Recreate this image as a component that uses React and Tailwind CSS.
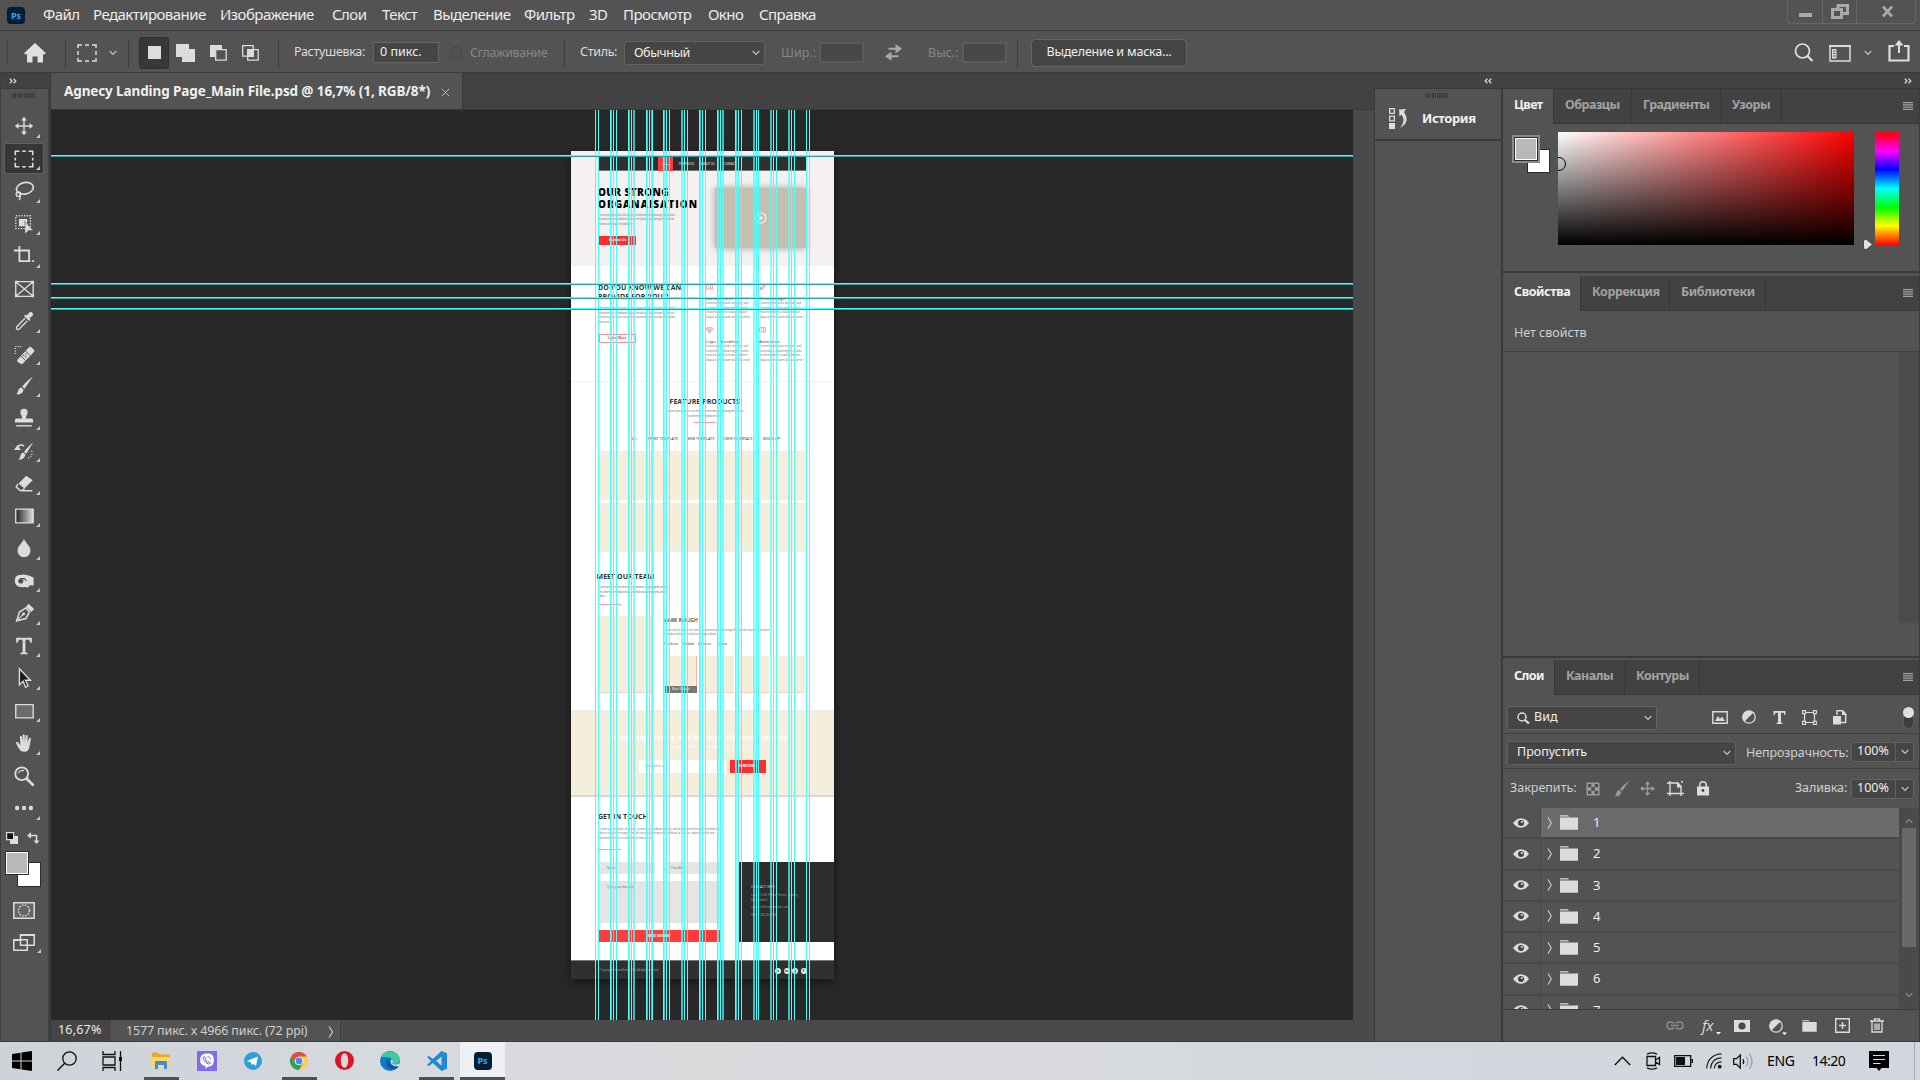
import React from "react";

const UI = "font-['Noto_Sans','Open_Sans',sans-serif]";

/* ---------- small shared pieces ---------- */

const Svg = ({ w = 24, h = 24, vb = "0 0 24 24", className = "", children }) => (
  <svg width={w} height={h} viewBox={vb} fill="none" className={`shrink-0 ${className}`}>
    {children}
  </svg>
);

const Chevron = ({ className = "text-[#c4c4c4]" }) => (
  <Svg w={8} h={6} vb="0 0 8 6" className={className}>
    <path d="M.7 1 4 4.5 7.3 1" stroke="currentColor" strokeWidth="1.1" />
  </Svg>
);

const DoubleArrow = ({ left }) => (
  <Svg w={8} h={6} vb="0 0 8 6" className={left ? "rotate-180" : ""}>
    <path d="M.8.6 3 3 .8 5.4M4.6.6 6.8 3 4.6 5.4" stroke="#dcdcdc" strokeWidth="1.3" />
  </Svg>
);

const Grip = ({ className = "" }) => (
  <div className={`flex gap-px ${className}`}>
    {Array.from({ length: 10 }, (_, i) => (
      <span key={i} className="h-[5px] w-[1.4px] bg-[#3a3a3a]" />
    ))}
  </div>
);

const Burger = () => (
  <Svg w={10} h={8} vb="0 0 10 8">
    <path d="M0 .7h10M0 2.9h10M0 5.1h10M0 7.3h10" stroke="#b8b8b8" strokeWidth="1" />
  </Svg>
);

const Sep = ({ className = "" }) => <div className={`h-[28px] w-px shrink-0 bg-[#3c3c3c] ${className}`} />;

/* ---------- menu bar ---------- */

const menus = [
  ["Файл", "w-[50px]"],
  ["Редактирование", "w-[127px]"],
  ["Изображение", "w-[112px]"],
  ["Слои", "w-[50px]"],
  ["Текст", "w-[51px]"],
  ["Выделение", "w-[91px]"],
  ["Фильтр", "w-[65px]"],
  ["3D", "w-[34px]"],
  ["Просмотр", "w-[85px]"],
  ["Окно", "w-[51px]"],
  ["Справка", "w-[70px]"],
];

const PsLogo = ({ className }) => (
  <div className={`flex items-center justify-center bg-[#001e36] font-bold leading-none text-[#31a8ff] ${className}`}>
    Ps
  </div>
);

const MenuBar = () => (
  <div className="flex h-[31px] items-center border-b border-[#393939] bg-[#535353] pl-[7px]">
    <PsLogo className="mr-[18px] h-[17px] w-[18px] rounded-[4px] text-[9px]" />
    {menus.map(([t, c]) => (
      <span key={t} className={`shrink-0 whitespace-nowrap pb-[2px] text-[15px] leading-none tracking-[-0.550px] text-[#ececec] ${c}`}>{t}</span>
    ))}
    <div className="ml-auto mr-[4px] flex h-[24px] w-[129px] self-start rounded-b-[4px] border border-t-0 border-[#666]">
      <div className="flex w-[35px] items-center justify-center border-r border-[#666]">
        <span className="mt-[7px] h-[4px] w-[13px] bg-[#a9a9a9]" />
      </div>
      <div className="flex w-[34px] items-center justify-center border-r border-[#666]">
        <Svg w={18} h={15} vb="0 0 18 15">
          <path d="M1.500 5.500h9v8h-9zM7 5V1.500h9.500v8H11.500" stroke="#a9a9a9" strokeWidth="3" />
        </Svg>
      </div>
      <div className="flex flex-1 items-center justify-center pl-[2px]">
        <Svg w={13} h={11} vb="0 0 13 11">
          <path d="M2 .5 11 10.500M11 .5 2 10.500" stroke="#a9a9a9" strokeWidth="2.800" />
        </Svg>
      </div>
    </div>
  </div>
);

/* ---------- options bar ---------- */

const OptionsBar = () => (
  <div className="flex h-[42px] items-center border-b border-[#3a3a3a] bg-[#535353] pt-[2px] text-[12.500px] leading-none text-[#dcdcdc]">
    <div className="ml-[6px] flex w-[18px] flex-col gap-px">
      {Array.from({ length: 12 }, (_, i) => <span key={i} className="h-px w-[2px] bg-[#3d3d3d]" />)}
    </div>
    <Svg w={22} h={20} vb="0 0 22 20" className="mr-[19px]">
      <path d="M11 0 0 10.200 1.500 11.500 3 11v8.500h5.500v-6h5v6H19V11l1.500.5L22 10.200Z" fill="#e0e0e0" />
    </Svg>
    <Sep className="mr-[11px]" />
    <Svg w={20} h={18} vb="0 0 20 18" className="mr-[12px]">
      <path d="M1 4V1h4M8 1h4M15 1h4v3M19 7v4M19 14v3h-4M12 17H8M5 17H1v-3M1 11V7" stroke="#dcdcdc" strokeWidth="1.500" />
    </Svg>
    <Chevron />
    <Sep className="ml-[11px] mr-[10px]" />
    <div className="flex h-[32px] w-[30px] items-center justify-center rounded-[3px] border border-[#303030] bg-[#383838]">
      <span className="h-[13px] w-[13px] bg-[#dcdcdc]" />
    </div>
    <Svg w={19} h={18} vb="0 0 19 18" className="ml-[7px]">
      <path d="M0 0h13v5h6v13H6v-5H0z" fill="#dcdcdc" />
    </Svg>
    <Svg w={17} h={16} vb="0 0 17 16" className="ml-[15px]">
      <path d="M0 0h12v4H5v8H0z" fill="#dcdcdc" />
      <path d="M5.700 4.700h10.500v10.500H5.700z" stroke="#dcdcdc" strokeWidth="1.300" />
    </Svg>
    <Svg w={17} h={16} vb="0 0 17 16" className="ml-[15px]">
      <path d="M.7.7h10.500v10.500H.7zM5.700 4.700h10.500v10.500H5.700z" stroke="#dcdcdc" strokeWidth="1.300" />
      <path d="M5 4h7v8H5z" fill="#dcdcdc" />
    </Svg>
    <Sep className="ml-[19px] mr-[15px]" />
    <span className="-mt-px w-[79px] shrink-0 whitespace-nowrap tracking-[-0.300px]">Растушевка:</span>
    <div className="-mt-px flex h-[21px] w-[66px] items-center border border-[#666] bg-[#454545] pl-[6px] text-[#efefef]">0 пикс.</div>
    <span className="ml-[12px] h-[12px] w-[11px] rounded-[3px] border border-[#484848] bg-[#515151]" />
    <span className="ml-[8px] mt-[2px] w-[94px] shrink-0 whitespace-nowrap tracking-[-0.300px] text-[#868686]">Сглаживание</span>
    <Sep className="mr-[15px]" />
    <span className="-mt-px w-[44px] shrink-0 whitespace-nowrap tracking-[-0.300px]">Стиль:</span>
    <div className="mt-[1px] flex h-[24px] w-[141px] items-center justify-between rounded-[3px] border border-[#626262] bg-[#454545] pl-[9px] pr-[4px] text-[#efefef]">
      <span className="tracking-[-0.400px]">Обычный</span><Chevron />
    </div>
    <span className="ml-[16px] mt-[2px] w-[38px] shrink-0 whitespace-nowrap text-[#868686]">Шир.:</span>
    <div className="-mt-px h-[21px] w-[45px] border-2 border-[#5b5b5b] bg-[#484848]" />
    <Svg w={17} h={17} vb="0 0 17 17" className="ml-[21px]">
      <path d="M3.500 4.700H11M13.500 12.300H6" stroke="#a8a8a8" strokeWidth="2" />
      <path d="M10.500 0 17 4.700 10.500 9.400zM6.500 7.600 0 12.300 6.500 17z" fill="#a8a8a8" />
    </Svg>
    <span className="ml-[26px] mt-[2px] w-[34px] shrink-0 whitespace-nowrap text-[#868686]">Выс.:</span>
    <div className="-mt-px h-[21px] w-[45px] border-2 border-[#5b5b5b] bg-[#484848]" />
    <Sep className="ml-[10px] mr-[13px]" />
    <div className="flex h-[28px] w-[156px] items-center justify-center rounded-[4px] border border-[#666] bg-[#454545] tracking-[-0.200px] text-[#efefef]">
      Выделение и маска...
    </div>
    <div className="ml-auto flex items-center pr-[10px]">
      <Svg w={20} h={19} vb="0 0 20 19" className="mr-[15px]">
        <circle cx="8.500" cy="8" r="7" stroke="#e0e0e0" strokeWidth="1.700" />
        <path d="m13.500 13 5 5" stroke="#e0e0e0" strokeWidth="2.200" />
      </Svg>
      <Svg w={22} h={17} vb="0 0 22 17" className="mr-[13px] mt-[1px]">
        <path d="M1 1.200h20v14.800H1z" stroke="#dcdcdc" strokeWidth="1.500" />
        <path d="M3 4h4.500v9.500H3z" fill="#dcdcdc" />
        <path d="M4 6h2.500M4 8.500h2.500M4 11h2.500" stroke="#535353" />
        <path d="M0 1h22" stroke="#dcdcdc" strokeWidth="2" />
      </Svg>
      <Chevron />
      <Svg w={22} h={22} vb="0 0 22 22" className="-mt-[3px] ml-[16px]">
        <path d="M6 6H1.500v14.500h19V6H16" stroke="#e0e0e0" strokeWidth="2.200" />
        <path d="M11 13V4" stroke="#e0e0e0" strokeWidth="2" />
        <path d="M11 0 6.500 5.500h9z" fill="#e0e0e0" />
      </Svg>
    </div>
  </div>
);

/* ---------- tools ---------- */

const S = { stroke: "#dcdcdc", strokeWidth: 1.5 };
const F = { fill: "#dcdcdc" };

const tools = [
  <><path d="M12 4v16M4 12h16" {...S} /><path d="M12 2 8.800 6h6.400zM12 22l-3.200-4h6.400zM2 12l4-3.200v6.400zM22 12l-4-3.200v6.400z" {...F} /></>,
  <path d="M2.500 8V3.500H7M10 3.500h4M17 3.500h4.500V8M21.500 10.500v3M21.500 16v4.500H17M14 20.500h-4M7 20.500H2.500V16M2.500 13.500v-3" {...S} strokeWidth="1.700" />,
  <><ellipse cx="13" cy="9" rx="9.300" ry="6.300" transform="rotate(-12 13 9)" {...S} strokeWidth="1.800" /><circle cx="6" cy="15.500" r="2.500" {...S} /><path d="M7 16c1.500 2 1 4-.5 6" {...S} /></>,
  <><path d="M3 3h16v14H3z" {...S} strokeDasharray="1.500 1.500" /><path d="M6.500 6.500h9v8h-9z" {...F} /><path d="m13 9 9 10h-5l-4 4z" {...F} stroke="#535353" strokeWidth=".6" /></>,
  <path d="M1 6h16.500v12M7 1v16.500h12M21 17.500h2" {...S} strokeWidth="2" />,
  <><path d="M3 4h19v16H3zM3 4l19 16M22 4 3 20" {...S} /><path d="M2 3h3v3H2zM20 3h3v3h-3zM2 18h3v3H2zM20 18h3v3h-3z" {...F} /></>,
  <><path d="m13 9-9 9.500c-1 2 .5 3.500 2.500 2.500l9-9" {...S} /><path d="M12 6.500 13.500 5l1.500 1 2.500-3c2-2.500 6 1 3.800 3.300L18 9l1 1.500L17.500 12z" {...F} /></>,
  <><path d="m4.500 18.500 13-14c1.500-1.500 5.500 3 6 4.500L10.500 22.500c-1.500 1.500-7-2.500-6-4z" {...F} /><path d="m8.500 14 5 5M13.500 8.500l5 5" stroke="#535353" /><path d="M11.700 13.500h.1M14.200 12h.1M14 15h.1" stroke="#535353" strokeWidth="1.500" strokeLinecap="round" /><path d="M2.500 12V4h7.500" {...S} strokeDasharray="1.200 1.500" /></>,
  <><path d="M21.500 2 12.500 15l-2.500-2.500C13 9 17 5 21.500 2z" {...F} /><path d="M9 13.500l2.500 2.500c-.5 4-4.500 5.500-8 5 2.500-2 1.500-6.500 5.500-7.500z" {...F} /></>,
  <><path d="M12 2a4 4 0 0 1 4 4c0 2.500-2 3.500-2 6.500h6.500c1 0 1.500 1 1.500 4.500H2c0-3.500.5-4.500 1.500-4.500H10c0-3-2-4-2-6.500a4 4 0 0 1 4-4z" {...F} /><path d="M3.500 20.500h17" {...S} /></>,
  <><path d="M22 2.500 14.500 15l-2.500-2C15 9 18 6 22 2.500zM11 13.500l2.500 2c-.5 4.500-4 6-7.500 6 2.500-2.500 1.500-7 5-8z" {...F} /><path d="M4 8.500C7 4.500 11 5 12 7" {...S} /><path d="M1 11h7.500L5 5.500z" {...F} /><path d="M20.500 12v5l-4 3" {...S} strokeDasharray="1.200 1.800" /></>,
  <><path d="m14.500 4 7 5L12.500 18 6 12.500z" {...F} /><path d="M5.500 13 3.500 16.500 7.500 20h3l2-2M8 20.500h13" {...S} /></>,
  <><defs><linearGradient id="toolGrad"><stop stopColor="#222" /><stop offset="1" stopColor="#ddd" /></linearGradient></defs><path d="M3 4.500h19v15H3z" fill="url(#toolGrad)" {...S} /></>,
  <path d="M12 2c2 5 7 8 7 12.500A7 7 0 0 1 12 22a7 7 0 0 1-7-7.500C5 10 10 7 12 2z" {...F} />,
  <><path d="M7 5.500c5-1.500 11 0 15.500 3V17l-4-.5-2 2.500-4-.5C6 19.500 2 16.500 2 12S4 6 7 5.500z" {...F} /><circle cx="8.500" cy="12" r="2.800" fill="#535353" /><path d="M8 9.500h4.500l2 2.500" stroke="#535353" strokeWidth="1.300" /></>,
  <><path d="M4 20.500 7 11l7-4.500L18 11l-4 7z" {...S} strokeWidth="1.700" /><path d="M4 20.500 11 13.500" {...S} strokeWidth="1.200" /><circle cx="11.500" cy="13" r="1.600" {...F} /><path d="m14 5.500 3-3.500 6 5.500-3 3.300z" {...F} /></>,
  <path d="M3.500 3h17v5.500h-1.500L17.500 5.200H13.500v13.500L16 19.500V21H8v-1.500l2.500-.8V5.200H6.500L5 8.500H3.500z" {...F} />,
  <path d="M7 2 19 14.500h-5.500l3 6-2.700 1.500-2.800-6.500-4 4z" fill="#1c1c1c" {...S} />,
  <path d="M3 5h19v14.500H3z" fill="#6b6b6b" {...S} />,
  <path d="M3 11.500c1-1 2.500-.5 3.500 1L8 14.500 7.500 5c.2-1.300 2-1.300 2.200 0l.8 6V3.500c.2-1.400 2.200-1.400 2.400 0v7.500l1-7c.3-1.300 2.200-1 2.200.3l-.3 7.200 1.700-4.500c.6-1.200 2.300-.6 2 .8L18 16c-.8 4-2.500 5.500-6 5.500-4 0-5-2-9-10z" {...F} />,
  <><circle cx="9.500" cy="9.500" r="7" {...S} strokeWidth="2" /><path d="M6 9a4 4 0 0 1 6-2.500" {...S} strokeWidth="1.200" /><path d="m14.500 14.500 8 8" {...S} strokeWidth="3" /></>,
  <><circle cx="4.500" cy="12" r="2.400" {...F} /><circle cx="12" cy="12" r="2.400" {...F} /><circle cx="19.500" cy="12" r="2.400" {...F} /></>,
];

const ToolBar = () => (
  <div className="flex w-[50px] shrink-0 flex-col border-l border-[#3d3d3d] bg-[#535353]">
    <div className="flex h-[16px] items-center border-b border-[#3a3a3a] bg-[#424242] pl-[8px]"><DoubleArrow /></div>
    <div className="flex flex-1 flex-col border-r-2 border-[#404040]">
      <div className="h-[21px] pl-[11px] pt-[4px]"><Grip /></div>
      {tools.map((t, i) => (
        <div key={i} className="flex h-[32.480px] shrink-0 items-center pl-[3px]">
          <div className={`relative flex h-[31px] w-[40px] items-center justify-center rounded-[2px] border ${i === 1 ? "border-[#616161] bg-[#373737]" : "border-transparent"}`}>
            <Svg w={22} h={22}>{t}</Svg>
            {i !== 5 && i !== 20 && (
              <Svg w={4} h={4} vb="0 0 4 4" className="absolute bottom-[3px] right-[3px]"><path d="M4 0v4H0z" fill="#c8c8c8" /></Svg>
            )}
          </div>
        </div>
      ))}
      <div className="mt-[3px] flex h-[22px] items-center pl-[5px]">
        <Svg w={12} h={12} vb="0 0 12 12"><path d="M4 4h8v8H4z" fill="#dcdcdc" /><path d="M.6.6h7v7h-7z" fill="#111" stroke="#dcdcdc" strokeWidth="1.200" /></Svg>
        <Svg w={13} h={12} vb="0 0 13 12" className="ml-[9px]"><path d="M2 3.500h7.500V10" stroke="#dcdcdc" strokeWidth="1.500" /><path d="M0 3.500 4 .3v6.400zM9.500 12 6.500 8.500h6z" fill="#dcdcdc" /></Svg>
      </div>
      <div className="relative mt-[2px] h-[36px]">
        <div className="absolute left-[16px] top-[11px] h-[25px] w-[24px] border border-[#2b2b2b] bg-white" />
        <div className="absolute left-[4px] top-0 h-[24px] w-[24px] border border-[#2b2b2b] bg-white p-px"><div className="h-full w-full bg-[#b8b8b8]" /></div>
      </div>
      <Svg w={22} h={17} vb="0 0 22 17" className="ml-[12px] mt-[15px]">
        <path d="M.8.8h20.400v15.400H.8z" fill="#666" stroke="#dcdcdc" strokeWidth="1.500" /><circle cx="11" cy="8.500" r="5.500" stroke="#dcdcdc" strokeWidth="1.500" strokeDasharray="1.500 1.400" />
      </Svg>
      <div className="flex items-end">
        <Svg w={22} h={17} vb="0 0 22 17" className="ml-[12px] mt-[15px]">
          <path d="M.8 5.800h13.400v10.400H.8zM7.500.8h13.700v10.400H7.500z" fill="#535353" stroke="#dcdcdc" strokeWidth="1.500" /><path d="M0 6h7M7 1h15" stroke="#dcdcdc" strokeWidth="2" />
        </Svg>
        <Svg w={4} h={4} vb="0 0 4 4" className="-mb-[2px] ml-[2px]"><path d="M4 0v4H0z" fill="#c8c8c8" /></Svg>
      </div>
    </div>
  </div>
);

/* ---------- artboard ---------- */

const At = ({ c, children }) => <div className={`absolute ${c}`}>{children}</div>;
const T = ({ c, children }) => <div className={`absolute -translate-y-1/2 whitespace-nowrap leading-none ${c}`}>{children}</div>;
const P = ({ c, lines }) => (
  <div className={`absolute whitespace-nowrap text-[3.300px] leading-[4.700px] text-[#808080] ${c}`}>
    {lines.map((l, i) => <div key={i}>{l}</div>)}
  </div>
);

const L1 = "Lorem ipsum dolor sit amet, consectetur adipiscing elit, sed do";
const L2 = "mod tempor incididunt labore et dolore adipiscing elit, sed do";
const L3 = "eiusmod tempor incididunt";

const feature = ["Lorem ipsum dolor sit amet, sed", "consectetur adipiscing elit sed do", "mod incididunt ut labore dolore", "aliqua lorem ipsum dolor sit amet"];

const Artboard = () => (
  <div className="absolute left-[520px] top-[41px] h-[828px] w-[263px] overflow-hidden bg-white font-['Open_Sans','Noto_Sans',sans-serif]">
    <At c="left-0 top-0 h-[115px] w-full bg-[#f5f1f1]" />
    <At c="left-[27px] top-[5px] h-[15px] w-[208px] border-b border-[#777] bg-[#2f2f2f]" />
    <At c="left-[87px] top-[5px] h-[15px] w-[15px] bg-[#ff3b3b]" />
    <T c="left-[91px] top-[12.500px] text-[2.500px] text-white">HOME</T>
    <T c="left-[108px] top-[12.500px] text-[2.800px] text-white">PORTFOLIO</T>
    <T c="left-[130px] top-[12.500px] text-[2.800px] text-white">ABOUT US</T>
    <T c="left-[153px] top-[12.500px] text-[2.600px] text-white">CONTACT</T>
    <T c="left-[27px] top-[40.500px] text-[10px] font-extrabold tracking-[0.400px] text-black">OUR STRONG</T>
    <T c="left-[27px] top-[52.500px] text-[10px] font-extrabold tracking-[0.980px] text-black">ORGANAISATION</T>
    <P c="left-[27px] top-[61.500px] tracking-[-0.300px]" lines={[L1, L2, L3]} />
    <At c="left-[28px] top-[85px] h-[9px] w-[37px] bg-[#ff2d2d]" />
    <T c="left-[38px] top-[89.500px] text-[3.200px] font-bold text-white">Contact Us</T>
    <At c="left-[144px] top-[37px] h-[60px] w-[91px] bg-[#c4bfb0] shadow-[0_0_7px_rgba(0,0,0,0.35)]" />
    <At c="left-[184px] top-[61px]">
      <Svg w={12} h={12} vb="0 0 12 12"><circle cx="6" cy="6" r="5" stroke="#f5f2ea" strokeWidth="1.200" /><path d="M4.500 3.500v5L8.500 6z" fill="#f5f2ea" /></Svg>
    </At>

    <T c="left-[27px] top-[135.500px] text-[7px] font-bold tracking-[0.100px] text-[#333]">DO YOU KNOW WE CAN</T>
    <T c="left-[27px] top-[144.500px] text-[7px] font-bold tracking-[0.100px] text-[#333]">PROVIDE FOR YOU ?</T>
    <P c="left-[27px] top-[155px] tracking-[-0.300px]" lines={[L1, L2, L1, "dolore et"]} />
    <At c="left-[28px] top-[183px] h-[9px] w-[37px] border border-[#ff8f8f]" />
    <T c="left-[37px] top-[187.500px] text-[3.200px] font-bold text-[#ff3b3b]">Learn More</T>
    {[
      ["left-[135px] top-[133px]", "Management"],
      ["left-[188px] top-[133px]", "UI/UX Design"],
      ["left-[135px] top-[176px]", "Logo / Branding"],
      ["left-[188px] top-[176px]", "Animation"],
    ].map(([c, t], i) => (
      <At key={t} c={c}>
        <Svg w={7} h={6} vb="0 0 7 6">
          {i === 2
            ? <path d="M1.500.5h4L6.700 2 3.500 5.600.4 2zM.4 2h6.300M2.500 2l1 3.500 1-3.500" stroke="#ff6b6b" strokeWidth=".6" />
            : i === 1
              ? <path d="M.5 5.500 5.500.5l1 1L2.500 5.500zM1 3l2 2" stroke="#ff6b6b" strokeWidth=".7" />
              : <path d="M.5.5h6v4.500h-6zM2 2h2M4.500.5V5" stroke="#ff6b6b" strokeWidth=".6" />}
        </Svg>
        <T c="left-0 top-[13.500px] text-[4.300px] text-[#333]">{t}</T>
        <P c="left-0 top-[17px] tracking-[-0.250px]" lines={feature} />
      </At>
    ))}
    <At c="left-0 top-[230px] h-px w-full bg-[#f2f2f2]" />

    <T c="left-[98.500px] top-[249.800px] text-[7px] font-bold tracking-[0.050px] text-[#333]">FEATURE PRODUCTS</T>
    <P c="left-[92px] top-[258px] w-[84px] text-center tracking-[-0.300px]" lines={["Lorem ipsum dolor sit amet, consectetur adipiscing elit sed do", "mod tempor incididunt labore"]} />
    <At c="left-[123px] top-[271px] h-px w-[22px] bg-[#ff9a9a]" />
    <T c="left-[60px] top-[287.500px] text-[3.800px] text-[#ff3b3b]">ALL</T>
    <T c="left-[77px] top-[287.500px] text-[3.800px] text-[#333]">PRINT TEMPLATE</T>
    <T c="left-[116px] top-[287.500px] text-[3.800px] text-[#333]">WEB TEMPLATE</T>
    <T c="left-[152px] top-[287.500px] text-[3.800px] text-[#333]">USER INTERFACE</T>
    <T c="left-[192px] top-[287.500px] text-[3.800px] text-[#333]">MOCK-UP</T>
    <At c="left-[27px] top-[300px] h-[49px] w-[208px] bg-[#f5eedc]" />
    <At c="left-[27px] top-[352px] h-[49px] w-[208px] bg-[#f5eedc]" />

    <T c="left-[25.500px] top-[425.300px] text-[7px] font-bold tracking-[0.050px] text-[#333]">MEET OUR TEAM</T>
    <P c="left-[28px] top-[434px] tracking-[-0.440px]" lines={[L1, L2, "diam."]} />
    <At c="left-[28px] top-[453px] h-px w-[22px] bg-[#ff9a9a]" />
    <At c="left-[28px] top-[465px] h-[77px] w-[53px] border-b border-[#fbd0c4] bg-[#f5eedc]" />
    <T c="left-[92px] top-[468.800px] text-[5px] font-semibold text-[#333]">MARK WAUGH</T>
    <P c="left-[92px] top-[476.500px] tracking-[-0.200px]" lines={["Lorem ipsum dolor sit amet, consectetur adipiscing elit, sed do eiusmod tempor", "incididunt labore et dolore magna diam."]} />
    <T c="left-[93px] top-[493.500px] text-[3.200px] text-[#444]">Facebook</T>
    <T c="left-[112px] top-[493.500px] text-[3.200px] tracking-[-0.200px] text-[#444]">Dribbble</T>
    <T c="left-[127px] top-[493.500px] text-[3.200px] text-[#444]">Behance</T>
    <T c="left-[147px] top-[493.500px] text-[3.200px] tracking-[-0.200px] text-[#444]">Twitter</T>
    <At c="left-[94px] top-[505px] h-[37px] w-[32px] border-r border-[#f5b8a8] bg-[#f5eedc]" />
    <At c="left-[128px] top-[505px] h-[37px] w-[35px] border-b border-[#fbd0c4] bg-[#f5eedc]" />
    <At c="left-[166px] top-[505px] h-[37px] w-[32px] border-b border-[#fbd0c4] bg-[#f5eedc]" />
    <At c="left-[202px] top-[505px] h-[37px] w-[32px] border-b border-[#fbd0c4] bg-[#f5eedc]" />
    <At c="left-[94px] top-[535px] h-[7px] w-[32px] bg-[#7a776e]" />
    <T c="left-[101px] top-[538.300px] text-[3px] text-white">Mark Waugh</T>

    <At c="left-0 top-[559px] h-[87px] w-full border-b-2 border-t border-b-[#dad8d2] border-t-[#eee] bg-[#f5eedc]" />
    <T c="left-[40px] top-[585.800px] text-[7px] font-bold tracking-[0.070px] text-white">Design tips, tricks, and freebies. Delivered weekly.</T>
    <T c="left-[86px] top-[596.500px] text-[3.200px] tracking-[-0.150px] text-white">Lorem ipsum dolor sit amet, consectetur adipiscing elit, sed do eius</T>
    <At c="left-[68px] top-[609px] h-[13px] w-[87px] bg-white" />
    <T c="left-[74px] top-[615px] text-[3px] text-[#999]">Email Address</T>
    <At c="left-[159px] top-[609px] h-[13px] w-[36px] bg-[#ff2d2d]" />
    <T c="left-[168px] top-[615px] text-[3px] font-bold text-white">SUBSCRIBE</T>

    <T c="left-[27px] top-[664.800px] text-[7px] font-bold tracking-[0.050px] text-[#333]">GET IN TOUCH</T>
    <P c="left-[27px] top-[675.500px] tracking-[-0.200px]" lines={[L1 + " eiusmod tempor incididunt ut", "labore et dolore magna sed do eiusmod tempor incididunt ut labore, adipiscing elit sed", "eiusmod tempor incididunt ut labore et"]} />
    <At c="left-[28px] top-[698px] h-px w-[22px] bg-[#ff9a9a]" />
    <At c="left-[28px] top-[711px] h-[12px] w-[56px] bg-[#e5e5e5]" />
    <At c="left-[93px] top-[711px] h-[12px] w-[56px] bg-[#e5e5e5]" />
    <T c="left-[36px] top-[716.500px] text-[3px] text-[#666]">Name</T>
    <T c="left-[100px] top-[716.500px] text-[3px] text-[#666]">Your Mail</T>
    <At c="left-[28px] top-[730px] h-[42px] w-[121px] bg-[#e5e5e5]" />
    <T c="left-[36px] top-[736.500px] text-[3.200px] tracking-[-0.100px] text-[#666]">Type your message</T>
    <At c="left-[28px] top-[779px] h-[12px] w-[121px] bg-[#ff3b3b]" />
    <T c="left-[77px] top-[784.500px] text-[3px] font-bold text-white">SEND MESSAGE</T>
    <At c="left-[168px] top-[711px] h-[80px] w-[95px] bg-[#2d2d2d]" />
    <T c="left-[180px] top-[735.800px] text-[3.300px] text-[#ddd]">CONTACT INFO</T>
    <T c="left-[180px] top-[745.300px] text-[3.200px] tracking-[-0.100px] text-[#999]">Level 13/45 Palmer Street, Sydney,</T>
    <T c="left-[180px] top-[749.800px] text-[3.200px] tracking-[-0.100px] text-[#999]">Bangladesh</T>
    <T c="left-[180px] top-[757.300px] text-[3.200px] tracking-[-0.150px] text-[#999]">support@themeforest.com</T>
    <T c="left-[180px] top-[765px] text-[3.200px] tracking-[-0.150px] text-[#999]">(880) 1234 567 890</T>
    <At c="left-0 top-[809px] h-[19px] w-full border-t border-[#777] bg-[#303030]" />
    <T c="left-[27px] top-[819.500px] text-[3.200px] tracking-[-0.300px] text-[#999]">© Copyrights themeforest 2016. All rights reserved</T>
    <div className="absolute left-[204px] top-[817px] flex gap-[2.500px]">
      {["t", "in", "g", "f"].map((s) => (
        <span key={s} className="flex h-[6px] w-[6px] items-center justify-center rounded-full bg-[#eee] text-[4px] font-bold leading-none text-[#333]">{s}</span>
      ))}
    </div>
  </div>
);

/* Vertical guides: offset of the bright pixel inside the canvas. */
const vGuides = [
  "left-[544px]", "left-[547px]", "left-[559px]", "left-[562px]", "left-[565px]", "left-[577px]", "left-[580px]",
  "left-[595px]", "left-[598px]", "left-[601px]", "left-[612px]", "left-[615px]", "left-[618px]",
  "left-[633px]", "left-[636px]", "left-[648px]", "left-[651px]", "left-[654px]", "left-[666px]",
  "left-[669px]", "left-[684px]", "left-[687px]", "left-[690px]", "left-[705px]",
  "left-[707px]", "left-[722px]", "left-[725px]", "left-[740px]", "left-[743px]",
  "left-[755px]", "left-[758px]",
];
/* Second pixel of the guides that straddle a pixel boundary. */
const vSoft = [
  "left-[560px]", "left-[578px]", "left-[582px]", "left-[583px]", "left-[596px]", "left-[600px]", "left-[613px]",
  "left-[630px]", "left-[631px]", "left-[649px]", "left-[667px]", "left-[671px]", "left-[672px]", "left-[685px]",
  "left-[702px]", "left-[703px]", "left-[719px]", "left-[720px]", "left-[737px]", "left-[738px]",
];
const hGuides = ["top-[45px]", "top-[173px]", "top-[187px]", "top-[198px]"];

const Canvas = () => (
  <div className="relative h-[910px] w-[1302px] overflow-hidden bg-[#282828]">
    <div className="absolute left-[520px] top-[41px] h-[828px] w-[263px] shadow-[0_3px_8px_rgba(0,0,0,0.5)]" />
    <Artboard />
    {vSoft.map((c) => <div key={c} className={`absolute top-0 h-full w-px bg-[#4affff]/70 ${c}`} />)}
    {vGuides.map((c) => <div key={c} className={`absolute top-0 h-full w-px bg-[#4affff] ${c}`} />)}
    {hGuides.map((c) => <div key={c} className={`absolute left-0 h-[2px] w-full border-t border-[#4affff] bg-[#2ba3a3] ${c}`} />)}
  </div>
);

const Document = () => (
  <div className="flex w-[1324px] shrink-0 flex-col border-l border-[#383838] bg-[#4a4a4a]">
    <div className="flex h-[37px] border-b border-[#383838] bg-[#424242]">
      <div className="flex w-[412px] items-center border-r border-[#383838] bg-[#535353] pl-[13px] pt-[2px]">
        <span className="whitespace-nowrap text-[13.500px] font-bold leading-none tracking-[-0.110px] text-[#f0f0f0]">
          Agnecy Landing Page_Main File.psd @ 16,7% (1, RGB/8*)
        </span>
        <Svg w={9} h={9} vb="0 0 9 9" className="ml-auto mr-[12px]"><path d="m.7.700 7.600 7.600M8.300.7.700 8.300" stroke="#b8b8b8" /></Svg>
      </div>
    </div>
    <Canvas />
    <div className="flex h-[21px] items-center text-[12.500px] leading-none">
      <div className="flex h-full w-[60px] items-center bg-[#454545] pb-px pl-[7px] tracking-[0.200px] text-[#e8e8e8]">16,67%</div>
      <div className="flex h-full w-[230px] items-center border-r border-[#3f3f3f] bg-[#535353] pl-[15px] pt-[2px] text-[#d0d0d0]">
        <span className="w-[202px] shrink-0 whitespace-nowrap tracking-[-0.150px]">1577 пикс. x 4966 пикс. (72 ppi)</span>
        <Svg w={6} h={12} vb="0 0 6 12"><path d="M1 .5 4.500 6 1 11.500" stroke="#d0d0d0" strokeWidth="1.200" /></Svg>
      </div>
    </div>
  </div>
);

/* ---------- right panels ---------- */

const Tabs = ({ items }) => (
  <div className="flex h-[35px] shrink-0 bg-[#424242] text-[12.500px] font-bold leading-none">
    {items.map(([t, w], i) => (
      <div key={t} className={`flex shrink-0 items-center whitespace-nowrap border-r border-[#383838] pb-[2px] pl-[11px] ${w} ${i === 0 ? "bg-[#535353] text-[#f2f2f2]" : "border-b text-[#a3a3a3]"}`}>{t}</div>
    ))}
    <div className="flex flex-1 items-center justify-end border-b border-[#383838] pr-[6px]"><Burger /></div>
  </div>
);

const ColorPanel = () => (
  <div className="flex h-[184px] flex-col border-b-2 border-[#3a3a3a]">
    <Tabs items={[["Цвет", "w-[51px] tracking-[-0.500px]"], ["Образцы", "w-[78px] tracking-[-0.500px]"], ["Градиенты", "w-[89px] tracking-[-0.500px]"], ["Узоры", "w-[61px] tracking-[-0.500px]"]]} />
    <div className="flex pl-[9px] pt-[8px]">
      <div className="relative mt-[3px] h-[38px] w-[46px]">
        <div className="absolute left-[15px] top-[14px] h-[24px] w-[23px] border border-[#2b2b2b] bg-white" />
        <div className="absolute left-0 top-0 border-2 border-[#8c8c8c]">
          <div className="h-[24px] w-[24px] border border-[#2b2b2b] bg-white p-px"><div className="h-full w-full bg-[#b8b8b8]" /></div>
        </div>
      </div>
      <div className="relative h-[113px] w-[296px] overflow-hidden bg-[linear-gradient(to_top,#000,transparent),linear-gradient(to_right,#fff,#f00)]">
        <div className="absolute -left-[6px] top-[25px] h-[14px] w-[14px] rounded-full border border-black" />
      </div>
      <Svg w={10} h={11} vb="0 0 10 11" className="ml-[9px] mt-[107px]"><path d="M.5 1v9l3 .5L9.500 5.500 3.500.5z" fill="#e0e0e0" stroke="#333" strokeWidth=".8" /></Svg>
      <div className="ml-[2px] h-[113px] w-[24px] bg-[linear-gradient(to_bottom,#f00,#f0f_17%,#00f_33%,#0ff_50%,#0f0_67%,#ff0_83%,#f00)]" />
    </div>
  </div>
);

const PropsPanel = () => (
  <div className="mt-[3px] flex h-[382px] flex-col border-b-2 border-[#3a3a3a]">
    <Tabs items={[["Свойства", "w-[78px] tracking-[-0.400px]"], ["Коррекция", "w-[89px] tracking-[-0.400px]"], ["Библиотеки", "w-[96px] tracking-[-0.400px]"]]} />
    <div className="flex h-[41px] items-center border-b border-[#404040] pl-[11px] pt-[5px] text-[12.500px] leading-none text-[#cfcfcf]">Нет свойств</div>
    <div className="ml-auto h-[271px] w-[20px] bg-[#4b4b4b]" />
  </div>
);

const Select = ({ w, children }) => (
  <div className={`flex h-[24px] shrink-0 items-center rounded-[3px] border border-[#626262] bg-[#454545] pl-[9px] pr-[4px] text-[#efefef] ${w}`}>
    {children}<Chevron className="ml-auto text-[#c4c4c4]" />
  </div>
);

const Percent = () => (
  <div className="flex h-[20px] w-[63px] shrink-0 items-center rounded-[2px] border border-[#626262] bg-[#454545] text-[12.500px] text-[#efefef]">
    <span className="flex h-full w-[44px] items-center border-r border-[#626262] pb-px pl-[5px]">100%</span>
    <span className="flex flex-1 justify-center"><Chevron /></span>
  </div>
);

const Folder = ({ w = 18, h = 15 }) => (
  <Svg w={w} h={h} vb="0 0 18 15"><path d="M0 .3h8l1 1.200H0zM0 2.500h18V14q0 .8-.8.8H.8Q0 14.800 0 14z" fill="#dcdcdc" /></Svg>
);

const LayerRow = ({ n }) => (
  <div className="flex h-[31.250px] shrink-0">
    <div className="flex w-[38px] shrink-0 items-center justify-center border-b-2 border-r border-[#484848] pr-px">
      <Svg w={16} h={10} vb="0 0 16 10"><path d="M0 5Q3.500.3 8 .3T16 5Q12.500 9.700 8 9.700T0 5z" fill="#dcdcdc" /><circle cx="8" cy="5" r="3" fill="#454545" /><circle cx="8.800" cy="4" r="1.100" fill="#dcdcdc" /></Svg>
    </div>
    <div className={`flex flex-1 items-center border-b-2 border-[#4a4a4a] pl-[6px] ${n === 1 ? "bg-[#6b6b6b]" : ""}`}>
      <Svg w={6} h={12} vb="0 0 6 12"><path d="M1 .5 4.300 6 1 11.500" stroke="#d0d0d0" strokeWidth="1.100" /></Svg>
      <span className="ml-[7px]"><Folder /></span>
      <span className="ml-[15px] text-[13px] leading-none text-[#efefef]">{n}</span>
    </div>
  </div>
);

const LayersPanel = () => (
  <div className="mt-[2px] flex flex-1 flex-col overflow-hidden text-[12.500px] leading-none">
    <Tabs items={[["Слои", "w-[52px] tracking-[-0.500px]"], ["Каналы", "w-[70px] tracking-[-0.500px]"], ["Контуры", "w-[75px] tracking-[-0.500px]"]]} />
    <div className="flex h-[39px] shrink-0 items-center border-b border-[#404040] pl-[4px] pt-[9px]">
      <Select w="w-[150px] mb-[2px]">
        <Svg w={13} h={12} vb="0 0 13 12" className="mr-[4px]"><circle cx="5" cy="5" r="4" stroke="#dcdcdc" strokeWidth="1.500" /><path d="m8 8 4 3.500" stroke="#dcdcdc" strokeWidth="2.200" /></Svg>
        Вид
      </Select>
      <div className="ml-[55px] flex items-center pb-[3px]">
        <Svg w={16} h={13} vb="0 0 16 13" className="mr-[14px]"><path d="M.8.8h14.400v11.400H.8z" stroke="#dcdcdc" strokeWidth="1.400" /><path d="m3 10 3-5 2 3 2-2.500L13 10z" fill="#dcdcdc" /></Svg>
        <Svg w={14} h={14} vb="0 0 14 14" className="mr-[17px]"><circle cx="7" cy="7" r="6.200" stroke="#dcdcdc" strokeWidth="1.300" /><path d="M11.500 2.500A6.300 6.300 0 1 0 2.500 11.500z" fill="#dcdcdc" /></Svg>
        <Svg w={13} h={13} vb="4 3 16 17.500" className="mr-[16px]"><path d="M4 3h16v5.500h-1.500L17.500 5.500H14v13L16 19v1.500H8V19l2-.5v-13H6.500L5.500 8.500H4z" fill="#dcdcdc" /></Svg>
        <Svg w={15} h={15} vb="0 0 15 15" className="mr-[16px]"><path d="M2.500 2.500h10v10h-10z" stroke="#dcdcdc" strokeWidth="1.200" /><path d="M.6.6h3v3h-3zM11.400.6h3v3h-3zM.6 11.400h3v3h-3zM11.400 11.400h3v3h-3z" fill="#535353" stroke="#dcdcdc" strokeWidth="1.100" /></Svg>
        <Svg w={14} h={15} vb="0 0 14 15"><path d="M4 5V.8h5.500L12.700 4v8.500H8" stroke="#dcdcdc" strokeWidth="1.400" /><path d="M9 0v5h5zM0 6h8v8.500H0z" fill="#dcdcdc" /></Svg>
      </div>
      <div className="mb-[3px] ml-auto mr-[5px] h-[23px] w-[11px] rounded-full border border-[#5e5e5e] bg-[#3c3c3c]"><div className="-ml-px h-[11px] w-[11px] rounded-full bg-[#e0e0e0]" /></div>
    </div>
    <div className="flex h-[35px] shrink-0 items-center border-b border-[#404040] pl-[4px] pt-[3px]">
      <Select w="w-[229px]">Пропустить</Select>
      <span className="ml-[10px] mt-[2px] w-[103px] shrink-0 whitespace-nowrap tracking-[-0.100px] text-[#cfcfcf]">Непрозрачность:</span>
      <div className="-mt-[2px] ml-auto mr-[5px]"><Percent /></div>
    </div>
    <div className="flex h-[39px] shrink-0 items-center pl-[7px]">
      <span className="w-[76px] shrink-0 whitespace-nowrap text-[#cfcfcf]">Закрепить:</span>
      <Svg w={14} h={14} vb="0 0 14 14"><path d="M.5.5h13v13H.5z" fill="#9a9a9a" /><path d="M2 2h3.300v3.300H2zM8.700 2H12v3.300H8.700zM5.300 5.300h3.400v3.400H5.300zM2 8.700h3.300V12H2zM8.700 8.700H12V12H8.700z" fill="#4c4c4c" /></Svg>
      <Svg w={16} h={17} vb="3 1 19 21" className="ml-[14px]"><path d="M21.500 2 12.500 15l-2.500-2.500C13 9 17 5 21.500 2zM9 13.500l2.500 2.500c-.5 4-4.500 5.500-8 5 2.500-2 1.500-6.500 5.500-7.500z" fill="#9a9a9a" /></Svg>
      <Svg w={15} h={15} vb="2 2 20 20" className="ml-[10px]"><path d="M12 4v16M4 12h16" stroke="#9a9a9a" strokeWidth="1.800" /><path d="M12 2 8.500 6.500h7zM12 22l-3.500-4.500h7zM2 12l4.500-3.500v7zM22 12l-4.500-3.500v7z" fill="#9a9a9a" /></Svg>
      <Svg w={17} h={15} vb="0 0 17 15" className="ml-[12px]"><path d="M3 0v15M0 2h11l3 3.500V15M0 12.500h17" stroke="#dcdcdc" strokeWidth="1.400" /><path d="M10 1v5.500h5zM14 0h2v1.500h-2z" fill="#dcdcdc" /></Svg>
      <Svg w={12} h={15} vb="0 0 12 15" className="ml-[13px]"><path d="M2.800 6V4q0-3.200 3.200-3.200T9.200 4v2" stroke="#dcdcdc" strokeWidth="1.500" /><path d="M0 5.500h12v9H0z" fill="#dcdcdc" /><circle cx="6" cy="9.500" r="1.400" fill="#444" /></Svg>
      <span className="ml-auto w-[56px] shrink-0 whitespace-nowrap tracking-[-0.100px] text-[#cfcfcf]">Заливка:</span>
      <div className="mr-[5px]"><Percent /></div>
    </div>
    <div className="flex h-[202px] shrink-0 border-b border-[#3c3c3c]">
      <div className="flex h-full flex-1 flex-col overflow-hidden">
        {[1, 2, 3, 4, 5, 6, 7].map((n) => <LayerRow key={n} n={n} />)}
      </div>
      <div className="flex w-[20px] flex-col items-center bg-[#4a4a4a] pb-[11px] pt-[10px]">
        <Chevron className="rotate-180 text-[#8a8a8a]" />
        <div className="mt-[4px] h-[119px] w-[14px] bg-[#696969]" />
        <Chevron className="mt-auto text-[#8a8a8a]" />
      </div>
    </div>
    <div className="flex flex-1 items-center justify-end">
      <Svg w={18} h={9} vb="0 0 18 9"><path d="M8 2.500Q7 1 4.500 1 1 1 1 4.500T4.500 8Q7 8 8 6.500M10 2.500Q11 1 13.500 1 17 1 17 4.500T13.500 8Q11 8 10 6.500M5 4.500h8" stroke="#8c8c8c" strokeWidth="1.500" /></Svg>
      <div className="ml-[18px] flex w-[32px] items-end">
        <span className="w-[14px] font-['Open_Sans',sans-serif] text-[15px] italic tracking-[-0.500px] text-[#dcdcdc]">fx</span>
        <Svg w={5} h={3} vb="0 0 5 3" className="-mb-[2px]"><path d="M0 0h5L2.500 2.500z" fill="#fff" /></Svg>
      </div>
      <Svg w={16} h={12} vb="0 0 16 12"><path d="M0 0h16v12H0z" fill="#dcdcdc" /><circle cx="8" cy="6" r="3.600" fill="#484848" /></Svg>
      <Svg w={18} h={18} vb="0 -2 18 18" className="ml-[19px]"><circle cx="7" cy="7" r="6.200" stroke="#dcdcdc" strokeWidth="1.300" /><path d="M11.500 2.500A6.300 6.300 0 1 0 2.500 11.500z" fill="#dcdcdc" /><path d="M13 13.500h5L15.500 16z" fill="#fff" /></Svg>
      <span className="ml-[15px]"><Folder w={15} h={12} /></span>
      <Svg w={15} h={15} vb="0 0 15 15" className="ml-[18px]"><path d="M.7.7h13.600v13.600H.7zM7.500 4v7M4 7.500h7" stroke="#dcdcdc" strokeWidth="1.400" /></Svg>
      <Svg w={14} h={15} vb="0 0 14 15" className="ml-[20px] mr-[35px]"><path d="M0 3h14M4.500 3V.8h5V3M2 3v11h10V3M5 5.500v6.500M7 5.500v6.500M9 5.500v6.500" stroke="#dcdcdc" strokeWidth="1.300" /></Svg>
    </div>
  </div>
);

const RightSide = () => (
  <div className="flex flex-1 flex-col bg-[#535353]">
    <div className="flex h-[16px] shrink-0 items-center border-b border-[#383838] bg-[#424242]">
      <div className="flex w-[127px] justify-end pr-[9px]"><DoubleArrow left /></div>
      <div className="ml-auto mr-[8px]"><DoubleArrow /></div>
    </div>
    <div className="flex flex-1">
      <div className="flex w-[129px] shrink-0 flex-col border-l border-r-2 border-[#3b3b3b]">
        <div className="h-[52px] border-b-2 border-[#3b3b3b]">
          <Grip className="ml-[50px] pt-[4px]" />
          <div className="mt-[10px] flex items-center pl-[13px]">
            <Svg w={20} h={21} vb="0 0 20 21">
              <path d="M1.700.7h4.600v4.600H1.700zM1.700 8.200h4.600v4.600H1.700z" stroke="#dcdcdc" strokeWidth="1.300" /><path d="M1 15h6v6H1z" fill="#dcdcdc" />
              <path d="m11 1.500 7-.5-2 3c4 6 4 11.500-4 16 4-5 4.500-9 1.500-13.500L11.500 8.500z" fill="#dcdcdc" />
            </Svg>
            <span className="ml-[14px] whitespace-nowrap text-[13px] font-bold leading-none tracking-[-0.400px] text-[#f2f2f2]">История</span>
          </div>
        </div>
      </div>
      <div className="flex flex-1 flex-col border-r border-[#3b3b3b]">
        <ColorPanel />
        <PropsPanel />
        <LayersPanel />
      </div>
    </div>
  </div>
);

/* ---------- taskbar ---------- */

const TaskIcon = ({ w, open, active, children }) => (
  <div className={`flex h-full shrink-0 flex-col items-center ${w} ${active ? "bg-[#eef0f3]" : ""}`}>
    <div className="flex h-[35px] items-center pt-[2px]">{children}</div>
    {open && <span className={`h-[3px] bg-[#4d5054] ${active ? "w-full" : "w-[35px]"}`} />}
  </div>
);

const TaskBar = () => (
  <div className="flex h-[39px] shrink-0 items-start overflow-hidden border-t border-[#3a3a3a] bg-[linear-gradient(to_right,#cdd2d9,#d6d9de_20%,#dadbdd_36%,#d9dadd_50%,#d3d8dd_70%,#d2d6de)]">
    <TaskIcon w="w-[44px]"><Svg w={20} h={20} vb="0 0 20 20"><path d="M0 3l8.500-1.200V9.500H0zM9.500 1.600 20 0v9.500H9.500zM0 10.500h8.500v7.800L0 17zM9.500 10.500H20V20L9.500 18.500z" fill="#000" /></Svg></TaskIcon>
    <TaskIcon w="w-[46px]"><Svg w={20} h={20} vb="0 0 20 20"><circle cx="12.500" cy="7.500" r="6.700" stroke="#111" strokeWidth="1.300" /><path d="M7.700 12.300.5 19.500" stroke="#111" strokeWidth="1.500" /></Svg></TaskIcon>
    <TaskIcon w="w-[44px]"><Svg w={21} h={20} vb="0 0 21 20"><path d="M1 0v3.500h12V0M1 20v-3.500h12V20M1 6h12v8H1zM18.500 0v20" stroke="#111" strokeWidth="1.300" /><path d="M17 6h3v4h-3z" fill="#111" /></Svg></TaskIcon>
    <div className="ml-[4px]" />
    <TaskIcon w="w-[46px]" open><Svg w={18} h={17} vb="0 0 18 17"><path d="M0 1.500Q0 .5 1 .5h5l2 2h9q1 0 1 1V16H0z" fill="#e8a92c" /><path d="M0 5h18v11H0z" fill="#ffd75e" /><path d="M3 17v-7q0-1 1-1h10q1 0 1 1v7h-3v-4H6v4z" fill="#3b8ddb" /></Svg></TaskIcon>
    <TaskIcon w="w-[46px]"><Svg w={20} h={20} vb="0 0 20 20"><path d="M0 0h20v20H0z" fill="#7f6bf0" /><path d="M10 2.500c5 0 6.800 1.500 6.800 6.500s-2 6.500-5.800 6.500L8.500 18v-3C5 14.500 3.200 13 3.200 9S5 2.500 10 2.500z" fill="#fff" /><path d="M7 5.500c-1.500 1-.5 3.500 1.500 5.500s4 2.500 5 1l-1.800-1.700-1 .7C9.500 10.500 8.800 9.500 8.500 8.500l.8-.8zM10.500 5.500c1.800.2 2.800 1.500 2.800 3" stroke="#6a55d8" fill="none" strokeWidth="1" /></Svg></TaskIcon>
    <TaskIcon w="w-[46px]"><Svg w={18} h={18} vb="0 0 18 18"><circle cx="9" cy="9" r="9" fill="#2a9fd8" /><path d="M3 9 14 4.500l-2 9.500-3-2.300-1.500 1.500L7 10.500z" fill="#fff" /></Svg></TaskIcon>
    <TaskIcon w="w-[46px]" open><Svg w={18} h={18} vb="0 0 18 18"><circle cx="9" cy="9" r="9" fill="#fdd04b" /><path d="M1.200 4.500A9 9 0 0 1 16.800 4.500H9L5.100 11.250z" fill="#dd4f42" /><path d="M1.200 4.500A9 9 0 0 0 9 18l3.900-6.750H5.100z" fill="#2da057" /><circle cx="9" cy="9" r="4.300" fill="#fff" /><circle cx="9" cy="9" r="3.400" fill="#4a8af4" /></Svg></TaskIcon>
    <TaskIcon w="w-[45px]"><Svg w={19} h={19} vb="0 0 19 19"><path d="M9.500 0a9.500 9.500 0 1 0 0 19 9.500 9.500 0 0 0 0-19zm0 2.300c2.200 0 3.700 3.200 3.700 7.200s-1.500 7.200-3.700 7.200S5.800 13.500 5.800 9.500 7.300 2.300 9.500 2.300z" fillRule="evenodd" fill="#dc1526" /></Svg></TaskIcon>
    <TaskIcon w="w-[46px]"><Svg w={20} h={20} vb="0 0 20 20"><circle cx="10" cy="10" r="10" fill="#1478c8" /><path d="M1 6C4-1.500 18-2 20 8.500c0 4-4 5.500-7.500 4 1.500-2 .5-5.500-3.500-6S2.500 6 1 6z" fill="#3fc9a0" /><path d="M8 8c-2.500 2-3 9 4 10.500 3 .5 6-1.500 7-4-3 2-8.500 1-9-3.500z" fill="#0c59a4" /><path d="M11.500 8c2 1.500 1.500 3.500.8 4.500 2 1.500 5 1.300 7-.5l1 2.500c-3 1.500-9 1-9.700-3.500z" fill="#d6dade" /></Svg></TaskIcon>
    <TaskIcon w="w-[47px]" open><Svg w={20} h={20} vb="0 0 20 20"><path d="M14.500 0 20 2.300v15.400L14.500 20 5.800 12 2 15l-2-1 4-4-4-4 2-1 3.800 3zM14.500 5.500 9 10l5.500 4.500z" fillRule="evenodd" fill="#1f8ad2" /></Svg></TaskIcon>
    <TaskIcon w="w-[45px]" open active><PsLogo className="h-[18px] w-[18px] rounded-[4px] text-[9px]" /></TaskIcon>
    <div className="ml-auto flex h-[38px] items-center leading-none text-black">
      <Svg w={17} h={10} vb="0 0 17 10" className="mr-[15px]"><path d="M.8 9 8.500 1.300 16.200 9" stroke="#111" strokeWidth="1.400" /></Svg>
      <Svg w={15} h={18} vb="0 0 15 18" className="mr-[13px]"><path d="M1 4.500h8.500v9H1zM9.500 8l4-2.500v7l-4-2.500M1 2.200q5-2.500 10 0M1 15.800q5 2.500 10 0" stroke="#111" strokeWidth="1.300" /></Svg>
      <Svg w={19} h={12} vb="0 0 19 12" className="mr-[13px]"><path d="M.7.7h16v10.600h-16z" stroke="#111" strokeWidth="1.300" /><path d="M2 2h9v8H2zM17.500 4H19v4h-1.500z" fill="#111" /></Svg>
      <Svg w={16} h={16} vb="0 0 16 16" className="mr-[11px]"><path d="M.7 15.500C1 7 7 1 15.500.8M4.500 15.500C5 9 9 5 15.500 4.800M8.300 15.500C8.500 11.500 11 9 15.500 8.800" stroke="#222" strokeWidth="1.200" /><circle cx="13.700" cy="13.700" r="1.900" fill="#111" /></Svg>
      <Svg w={21} h={17} vb="0 0 21 17" className="mr-[13px]"><path d="M.7 5.700h2.800L7.300 2v13L3.500 11.300H.7z" stroke="#111" strokeWidth="1.300" /><path d="M10 6q1.500 2.500 0 5" stroke="#111" strokeWidth="1.200" /><path d="M13.200 3.500q3.500 5 0 10M16.500 1q5 7.500 0 15" stroke="#9a9da2" strokeWidth="1.300" /></Svg>
      <span className="w-[45px] text-[14px] tracking-[-0.300px]">ENG</span>
      <span className="w-[57px] text-[14px] tracking-[-0.500px]">14:20</span>
      <Svg w={20} h={20} vb="0 0 20 20" className="mr-[25px]"><path d="M0 0h20v17h-7.500L10 20l-2.500-3H0z" fill="#000" /><path d="M4 4.500h12M4 8.500h12M4 12.500h7.500" stroke="#d6dade" strokeWidth="1.200" /></Svg>
      <div className="mr-[5px] h-full w-px bg-[#a8acb2]" />
    </div>
  </div>
);

export default function App() {
  return (
    <div className={`flex h-[1080px] w-[1920px] flex-col overflow-hidden bg-[#535353] ${UI}`}>
      <MenuBar />
      <OptionsBar />
      <div className="flex h-[968px] shrink-0">
        <ToolBar />
        <Document />
        <RightSide />
      </div>
      <TaskBar />
    </div>
  );
}
